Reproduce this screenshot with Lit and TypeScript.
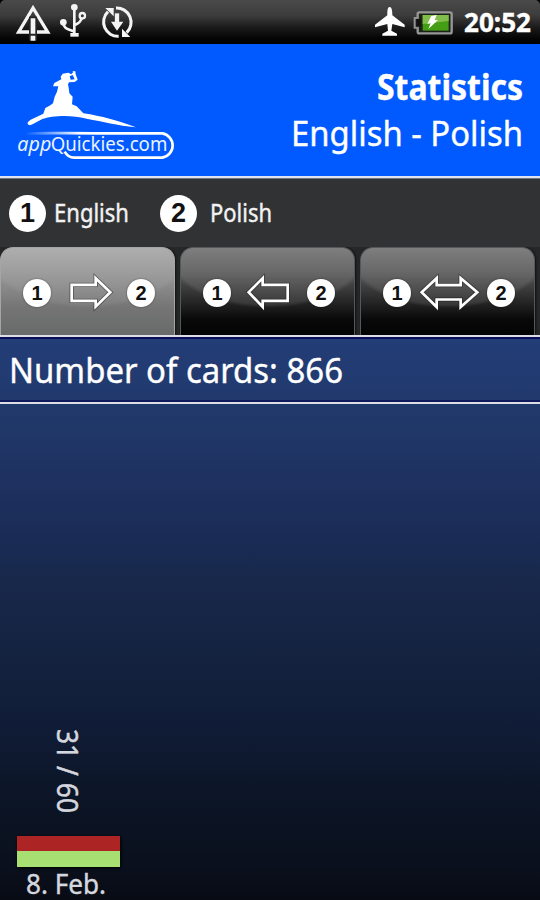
import { LitElement, html, svg, css } from "lit";
import { customElement, property } from "lit/decorators.js";

type Direction = "forward" | "backward" | "both";

const ARROWS: Record<Direction, string> = {
  forward: "M47 32.5H119V12.5L163 54.5L119 98V80.5H47Z",
  backward: "M155 32.5H80V12.5L38 54.5L80 99V80.5H155Z",
  both: "M17 54.5L62 12.5V33.5H134V12.5L184 54.5L134 99V76.5H62V99Z",
};

@customElement("fit-label")
export class FitLabel extends LitElement {
  @property() text = "";
  @property({ type: Number }) size = 24;
  @property({ type: Number }) span = 100;

  static styles = css`
    :host { display: block; flex: none; }
    svg { display: block; overflow: visible; }
    text { fill: currentColor; stroke: currentColor; stroke-width: .4; font-family: inherit; font-weight: inherit; }
  `;

  render() {
    const h = Math.round(this.size * 1.3);
    return html`<svg width=${this.span} height=${h}>
      ${svg`<text x="0" y=${this.size} font-size=${this.size} textLength=${this.span} lengthAdjust="spacingAndGlyphs">${this.text}</text>`}
    </svg>`;
  }
}

@customElement("direction-tab")
export class DirectionTab extends LitElement {
  @property() direction: Direction = "forward";
  @property({ type: Boolean, reflect: true }) active = false;

  static styles = css`
    :host { display: block; width: 180px; height: 88px; box-sizing: border-box; padding: 0 5px 0 0; }
    .face {
      box-sizing: border-box; height: 88px; border-radius: 13px 13px 0 0; display: flex;
      align-items: center; padding: 2px 0 0 22px;
      border: solid #55585a; border-width: 1px 1px 0;
      background:
        radial-gradient(105px 60px at 50% 0, rgba(255,255,255,.1) 94%, rgba(255,255,255,0) 100%),
        linear-gradient(#707070 0, #565656 28%, #2b2b2b 58%, #090909 82%, #030303);
      box-shadow: 1px 0 2px #111;
    }
    :host([active]) .face {
      border-color: #a5a5a5;
      background:
        radial-gradient(105px 60px at 50% 0, rgba(255,255,255,.06) 94%, rgba(255,255,255,0) 100%),
        linear-gradient(#a9a9a9 0, #929292 35%, #757575 68%, #686a69);
    }
    .badge {
      width: 28px; height: 28px; border-radius: 50%; background: #fff; color: #111;
      font: bold 20px/28px "Liberation Sans", sans-serif; text-align: center; flex: none;
      box-shadow: 0 0 2px rgba(0,0,0,.5);
    }
    .arrow { width: 66px; height: 38px; margin: 0 5px 0 5px; flex: none; overflow: visible; }
    .shade { fill: none; stroke: #202020; stroke-width: 13; opacity: .5; }
    .line { fill: none; stroke: #fff; stroke-width: 8; }
  `;

  render() {
    return html`<div class="face">
      <span class="badge">1</span>
      <svg class="arrow" viewBox="0 0 198 114">
        <path class="shade" d=${ARROWS[this.direction]}></path>
        <path class="line" d=${ARROWS[this.direction]}></path>
      </svg>
      <span class="badge">2</span>
    </div>`;
  }
}

@customElement("app-root")
export class AppRoot extends LitElement {
  static styles = css`
    :host {
      display: flex; flex-direction: column; width: 540px; height: 900px; overflow: hidden;
      background: #000; color: #fff; font-family: "Noto Sans", "Open Sans", sans-serif;
    }
    .status {
      height: 44px; flex: none; display: flex; align-items: flex-start; justify-content: space-between;
      background: linear-gradient(#4a4a4a, #3c3c3c 35%, #1b1b1b 62%, #040404 88%, #000);
      border-radius: 5px 5px 0 0;
    }
    .icons { width: 150px; height: 44px; display: block; }
    .right { display: flex; }
    .power { width: 94px; height: 44px; display: block; }
    .clock { font-weight: 700; margin: 6px 9px 0 0; }
    .header {
      height: 132px; flex: none; display: flex; justify-content: space-between;
      background: #005aff; border-bottom: 2px solid #dde3f2; box-shadow: 0 1px #6f7684; z-index: 1;
    }
    .logo { width: 190px; height: 132px; display: block; }
    .app, .quick { fill: #eaf3ff; font-family: "Noto Sans", "Open Sans", sans-serif; }
    .app { font-style: italic; }
    .titles { display: flex; flex-direction: column; align-items: flex-end; padding: 21px 17px 0 0; }
    .title { font-weight: 700; }
    .langs { height: 69px; flex: none; display: flex; background: #303233; color: #f2f2f2; align-items: flex-start; }
    .number {
      width: 37px; height: 37px; border-radius: 50%; background: #fff; color: #111; margin-top: 17px;
      font: bold 27px/37px "Liberation Sans", sans-serif; text-align: center; flex: none;
    }
    .n1 { margin-left: 9px; }
    .n2 { margin-left: 31px; }
    .l1 { margin: 19px 0 0 8px; }
    .l2 { margin: 19px 0 0 13px; }
    .tabs { height: 88px; flex: none; display: flex; background: #252728; overflow: hidden; }
    .body {
      flex: 1; display: flex; flex-direction: column;
      background: linear-gradient(#233d78 0, #203868 16%, #1e3160 26%, #192b53 38%, #18284a 44%, #14223f 58%, #101c36 70%, #0c1526 82%, #0a101d 94%, #080b14);
    }
    .count {
      height: 65px; border: solid #dcdee6; border-width: 2px 0;
      box-shadow: inset 0 2px #090e5a, inset 0 -2px #101b5c; padding-left: 9px; flex: none;
    }
    .count-label { margin-top: 11px; }
    .chart { flex: 1; display: flex; align-items: flex-end; color: #d5d7df; padding-left: 16.5px; }
    .column { width: 103px; display: flex; flex-direction: column; align-items: center; }
    .ratio { width: 30px; height: 85px; margin: 0 0 22px; display: block; overflow: visible; }
    .ratio-text { fill: currentColor; stroke: currentColor; stroke-width: .5; }
    .bar { width: 103px; box-shadow: 1px 1px 3px #000; }
    .wrong { background: #ac2424; }
    .right-part { background: #a8df73; }
    .day { margin: 0 5px -1px 0; }
  `;

  render() {
    const unit = 0.5;
    const right = 31;
    const total = 60;
    return html`
      <div class="status">
        <svg class="icons" viewBox="0 0 450 132">
          <g fill="none" stroke="#f4f4f4">
            <path d="M99 24L56 96H143Z" stroke-width="10"></path>
            <path d="M99 50V122" stroke="#252525" stroke-width="24"></path>
            <path d="M99 55V101M99 107V122" stroke-width="14"></path>
            <path d="M223 27V106M190 69C191 88 207 87 221 94M247 50C243 65 237 70 224 75" stroke-width="8"></path>
            <circle cx="247" cy="47" r="8" stroke-width="7" fill="#333"></circle>
            <path d="M356 109A43 43 0 0 1 324 35M348 24A43 43 0 0 1 380 98" stroke-width="9"></path>
            <path d="M351 40V70" stroke-width="13"></path>
          </g>
          <g fill="#f4f4f4">
            <circle cx="223" cy="22" r="10"></circle>
            <circle cx="190" cy="67" r="10"></circle>
            <path d="M211 99H236V110H211Z"></path>
            <path d="M333 65H370L351 92Z"></path>
            <path d="M316 24H341V49Z"></path>
            <path d="M366 86V111H391Z"></path>
          </g>
        </svg>
        <div class="right">
          <svg class="power" viewBox="30 0 282 132">
            <path fill="#fff" d="M89 21C83 21 82 31 82 46L45 74V82L82 72L84 92L67 101V107H111V101L94 92L97 72L134 82V74L97 46C97 31 95 21 89 21Z"></path>
            <rect x="173" y="37" width="102" height="63" rx="5" fill="#1c2218" stroke="#979797" stroke-width="7"></rect>
            <path d="M173 54H164V83H173" fill="#222" stroke="#929292" stroke-width="6"></path>
            <path d="M176 57V80" stroke="#111" stroke-width="13"></path>
            <path fill="#449d14" d="M188 45H266V92H188Z"></path>
            <path fill="#81bd4b" d="M188 45H266V63L188 72Z"></path>
            <path fill="#fff" d="M214 48L230 45L224 61L234 60L205 87L212 70L202 72Z"></path>
          </svg>
          <fit-label class="clock" text="20:52" size="26" span="67"></fit-label>
        </div>
      </div>
      <div class="header">
        <svg class="logo" viewBox="0 0 570 396">
          <defs>
            <linearGradient id="fade" gradientUnits="userSpaceOnUse" x1="75" y1="0" x2="240" y2="0">
              <stop offset="0" stop-color="#fff" stop-opacity="0"></stop>
              <stop offset="1" stop-color="#fff"></stop>
            </linearGradient>
            <linearGradient id="hook" gradientUnits="userSpaceOnUse" x1="190" y1="0" x2="210" y2="0">
              <stop offset="0" stop-color="#fff"></stop>
              <stop offset="1" stop-color="#fff"></stop>
            </linearGradient>
          </defs>
          <path fill="#fff" d="M188 89L205 86L214 91L220 84L217 81L226 82L227 91L233 107L224 114L207 115L204 121L207 137L208 148L218 158L216 181L230 187L250 208C306 216 351 230 408 250C350 244 310 233 260 224C212 211 155 215 127 225L99 240Q88 247 83 240Q81 234 92 227L130 209L136 192L151 184L159 178L164 158L171 143L175 127L159 127L163 117L184 106L182 98Z"></path>
          <path fill="#005aff" d="M209 97L218 93L224 106L212 107Z"></path>
          <path d="M75 269C130 266 180 268 300 268H487A37 37 0 0 1 487 341H300" fill="none" stroke="url(#fade)" stroke-width="8"></path>
          <path d="M301 341H222Q204 341 194 323" fill="none" stroke="url(#hook)" stroke-width="8"></path>
          <text class="app" x="52" y="321" font-size="60" textLength="102" lengthAdjust="spacingAndGlyphs">app</text>
          <text class="quick" x="152" y="321" font-size="60" textLength="350" lengthAdjust="spacingAndGlyphs">Quickies.com</text>
        </svg>
        <div class="titles">
          <fit-label class="title" text="Statistics" size="35" span="146"></fit-label>
          <fit-label text="English - Polish" size="35" span="232"></fit-label>
        </div>
      </div>
      <div class="langs">
        <span class="number n1">1</span>
        <fit-label class="l1" text="English" size="24.5" span="75"></fit-label>
        <span class="number n2">2</span>
        <fit-label class="l2" text="Polish" size="24.5" span="62"></fit-label>
      </div>
      <div class="tabs">
        <direction-tab direction="forward" active></direction-tab>
        <direction-tab direction="backward"></direction-tab>
        <direction-tab direction="both"></direction-tab>
      </div>
      <div class="body">
        <div class="count">
          <fit-label class="count-label" text="Number of cards: 866" size="35" span="334"></fit-label>
        </div>
        <div class="chart">
          <div class="column">
            <svg class="ratio" viewBox="0 0 30 85">
              <text class="ratio-text" transform="translate(4 0) rotate(90)" x="0" y="0" font-size="28.5" textLength="84" lengthAdjust="spacingAndGlyphs">${right} / ${total}</text>
            </svg>
            <div class="bar">
              <div class="wrong" style="height:${Math.round((total - right) * unit)}px"></div>
              <div class="right-part" style="height:${Math.round(right * unit)}px"></div>
            </div>
            <fit-label class="day" text="8. Feb." size="26.5" span="80"></fit-label>
          </div>
        </div>
      </div>
    `;
  }
}
